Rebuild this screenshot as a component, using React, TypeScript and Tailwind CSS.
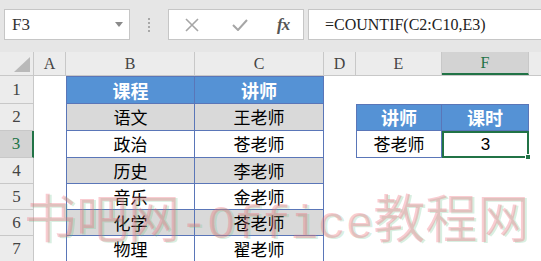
import React from 'react';

const serif = "font-['Liberation_Serif','Noto_Sans_CJK_SC',serif]";
const cjk = "font-['Noto_Sans_CJK_SC',sans-serif]";

const gridLine = 'border-[#c8c8c8]';
const tableLine = 'border-[#5a76b8]';

type Row = {
  n: number;
  h: string;
  b?: string;
  c?: string;
  fill?: 'head' | 'gray' | 'white';
  e?: string;
  f?: string;
  ef?: 'head' | 'white';
};

const rows: Row[] = [
  { n: 1, h: 'h-[28px]', b: '课程', c: '讲师', fill: 'head' },
  { n: 2, h: 'h-[27px]', b: '语文', c: '王老师', fill: 'gray', e: '讲师', f: '课时', ef: 'head' },
  { n: 3, h: 'h-[27px]', b: '政治', c: '苍老师', fill: 'white', e: '苍老师', f: '3', ef: 'white' },
  { n: 4, h: 'h-[26px]', b: '历史', c: '李老师', fill: 'gray' },
  { n: 5, h: 'h-[26px]', b: '音乐', c: '金老师', fill: 'white' },
  { n: 6, h: 'h-[26px]', b: '化学', c: '苍老师', fill: 'gray' },
  { n: 7, h: 'h-[26px]', b: '物理', c: '翟老师', fill: 'white' },
];

const fillClass = (f?: string) =>
  f === 'head'
    ? 'bg-[#5592d5] text-white font-bold text-[18px]'
    : f === 'gray'
    ? 'bg-[#d9d9d9] text-black text-[17px]'
    : 'bg-white text-black text-[17px]';

function Toolbar() {
  return (
    <div className="h-[52px] bg-[#e6e6e6] flex items-start pt-[9px] pl-[4px]">
      <div className="w-[126px] h-[31px] bg-white border border-[#c6c6c6] flex items-center justify-between pl-[7px] pr-[6px]">
        <span className={`${serif} text-[17px] text-[#333]`}>F3</span>
        <svg width="8" height="5" viewBox="0 0 8 5">
          <path d="M0 0 L8 0 L4 5 Z" fill="#8a8a8a" />
        </svg>
      </div>
      <div className="w-[38px] h-[31px] flex flex-col items-center justify-center gap-[2px]">
        <span className="w-[2px] h-[2px] bg-[#a8a8a8]" />
        <span className="w-[2px] h-[2px] bg-[#a8a8a8]" />
        <span className="w-[2px] h-[2px] bg-[#a8a8a8]" />
        <span className="w-[2px] h-[2px] bg-[#a8a8a8]" />
      </div>
      <div className="w-[136px] h-[31px] bg-white border border-[#c6c6c6] flex items-center">
        <svg className="ml-[16px]" width="14" height="14" viewBox="0 0 14 14">
          <path d="M1 1 L13 13 M13 1 L1 13" stroke="#a6a6a6" strokeWidth="1.6" />
        </svg>
        <svg className="ml-[33px]" width="16" height="12" viewBox="0 0 16 12">
          <path d="M1 6 L6 11 L15 1" stroke="#a6a6a6" strokeWidth="2" fill="none" />
        </svg>
        <span className={`${serif} italic font-bold text-[17px] text-[#555] ml-[29px] tracking-[-1px]`}>fx</span>
      </div>
      <div className="ml-[4px] flex-1 h-[31px] bg-white border border-[#c6c6c6] border-r-0 flex items-center pl-[16px]">
        <span className={`${serif} text-[16px] text-[#222]`}>=COUNTIF(C2:C10,E3)</span>
      </div>
    </div>
  );
}

function ColHeader() {
  const cols: [string, string, boolean?][] = [
    ['A', 'w-[32px]'],
    ['B', 'w-[129px]'],
    ['C', 'w-[129px]'],
    ['D', 'w-[32px]'],
    ['E', 'w-[86px]'],
    ['F', 'w-[87px]', true],
  ];
  return (
    <div className={`flex h-[24px] bg-[#ececec] border-b ${gridLine}`}>
      <div className={`w-[34px] shrink-0 border-r ${gridLine} flex items-end justify-end pr-[3px] pb-[3px]`}>
        <svg width="16" height="15" viewBox="0 0 16 15">
          <path d="M16 0 L16 15 L0 15 Z" fill="#b9b9b9" />
        </svg>
      </div>
      {cols.map(([l, w, sel]) => (
        <div
          key={l}
          className={`${w} shrink-0 border-r ${gridLine} flex items-center justify-center ${serif} text-[16px] ${
            sel ? 'bg-[#d3d3d3] text-[#217346] border-b-2 border-b-[#217346]' : 'text-[#444]'
          }`}
        >
          {l}
        </div>
      ))}
      <div className="flex-1" />
    </div>
  );
}

function SheetRow({ r }: { r: Row }) {
  const sel = r.n === 3;
  const tableBorder = `border-b border-r ${tableLine}`;
  return (
    <div className={`flex ${r.h}`}>
      <div
        className={`w-[34px] shrink-0 border-b ${gridLine} flex items-center justify-center ${serif} text-[17px] ${
          sel ? 'bg-[#d3d3d3] text-[#217346] border-r-2 border-r-[#217346]' : `bg-[#ececec] text-[#444] border-r ${gridLine}`
        }`}
      >
        {r.n}
      </div>
      <div className="w-[32px] shrink-0 bg-white" />
      <div className={`w-[129px] shrink-0 ${tableBorder} border-l ${r.n === 1 ? 'border-t' : ''} ${fillClass(r.fill)} ${cjk} flex items-center justify-center`}>
        {r.b}
      </div>
      <div className={`w-[129px] shrink-0 ${tableBorder} ${r.n === 1 ? 'border-t' : ''} ${fillClass(r.fill)} ${cjk} flex items-center justify-center`}>
        {r.c}
      </div>
      <div className="w-[32px] shrink-0 bg-white" />
      {r.ef ? (
        <>
          <div className={`w-[86px] shrink-0 ${tableBorder} border-l ${r.n === 2 ? 'border-t' : ''} ${fillClass(r.ef)} ${cjk} flex items-center justify-center`}>
            {r.e}
          </div>
          {sel ? (
            <div className="relative w-[87px] shrink-0 bg-white border-2 border-[#217346] flex items-center justify-center font-['Liberation_Sans',sans-serif] text-[17px] text-black">
              {r.f}
              <span className="absolute right-[-4px] bottom-[-4px] w-[6px] h-[6px] bg-[#217346] border border-white" />
            </div>
          ) : (
            <div className={`w-[87px] shrink-0 ${tableBorder} border-t ${fillClass(r.ef)} ${cjk} flex items-center justify-center`}>
              {r.f}
            </div>
          )}
        </>
      ) : (
        <>
          <div className="w-[86px] shrink-0 bg-white" />
          <div className="w-[87px] shrink-0 bg-white" />
        </>
      )}
      <div className="flex-1 bg-white" />
    </div>
  );
}

export default function App() {
  return (
    <div className="relative w-[541px] h-[261px] overflow-hidden bg-white">
      <Toolbar />
      <ColHeader />
      {rows.map((r) => (
        <SheetRow key={r.n} r={r} />
      ))}
      {/* watermark lies over the sheet */}
      <div className="pointer-events-none absolute left-[24px] top-[190px] flex items-baseline whitespace-nowrap leading-none text-[rgba(238,105,120,0.34)] [text-shadow:2px_1px_0_rgba(90,190,130,0.24)]">
        <span className={`${cjk} text-[52px]`}>书吧网</span>
        <span className="font-['Liberation_Mono',monospace] text-[46px]">-Office</span>
        <span className={`${cjk} text-[52px]`}>教程网</span>
      </div>
    </div>
  );
}
